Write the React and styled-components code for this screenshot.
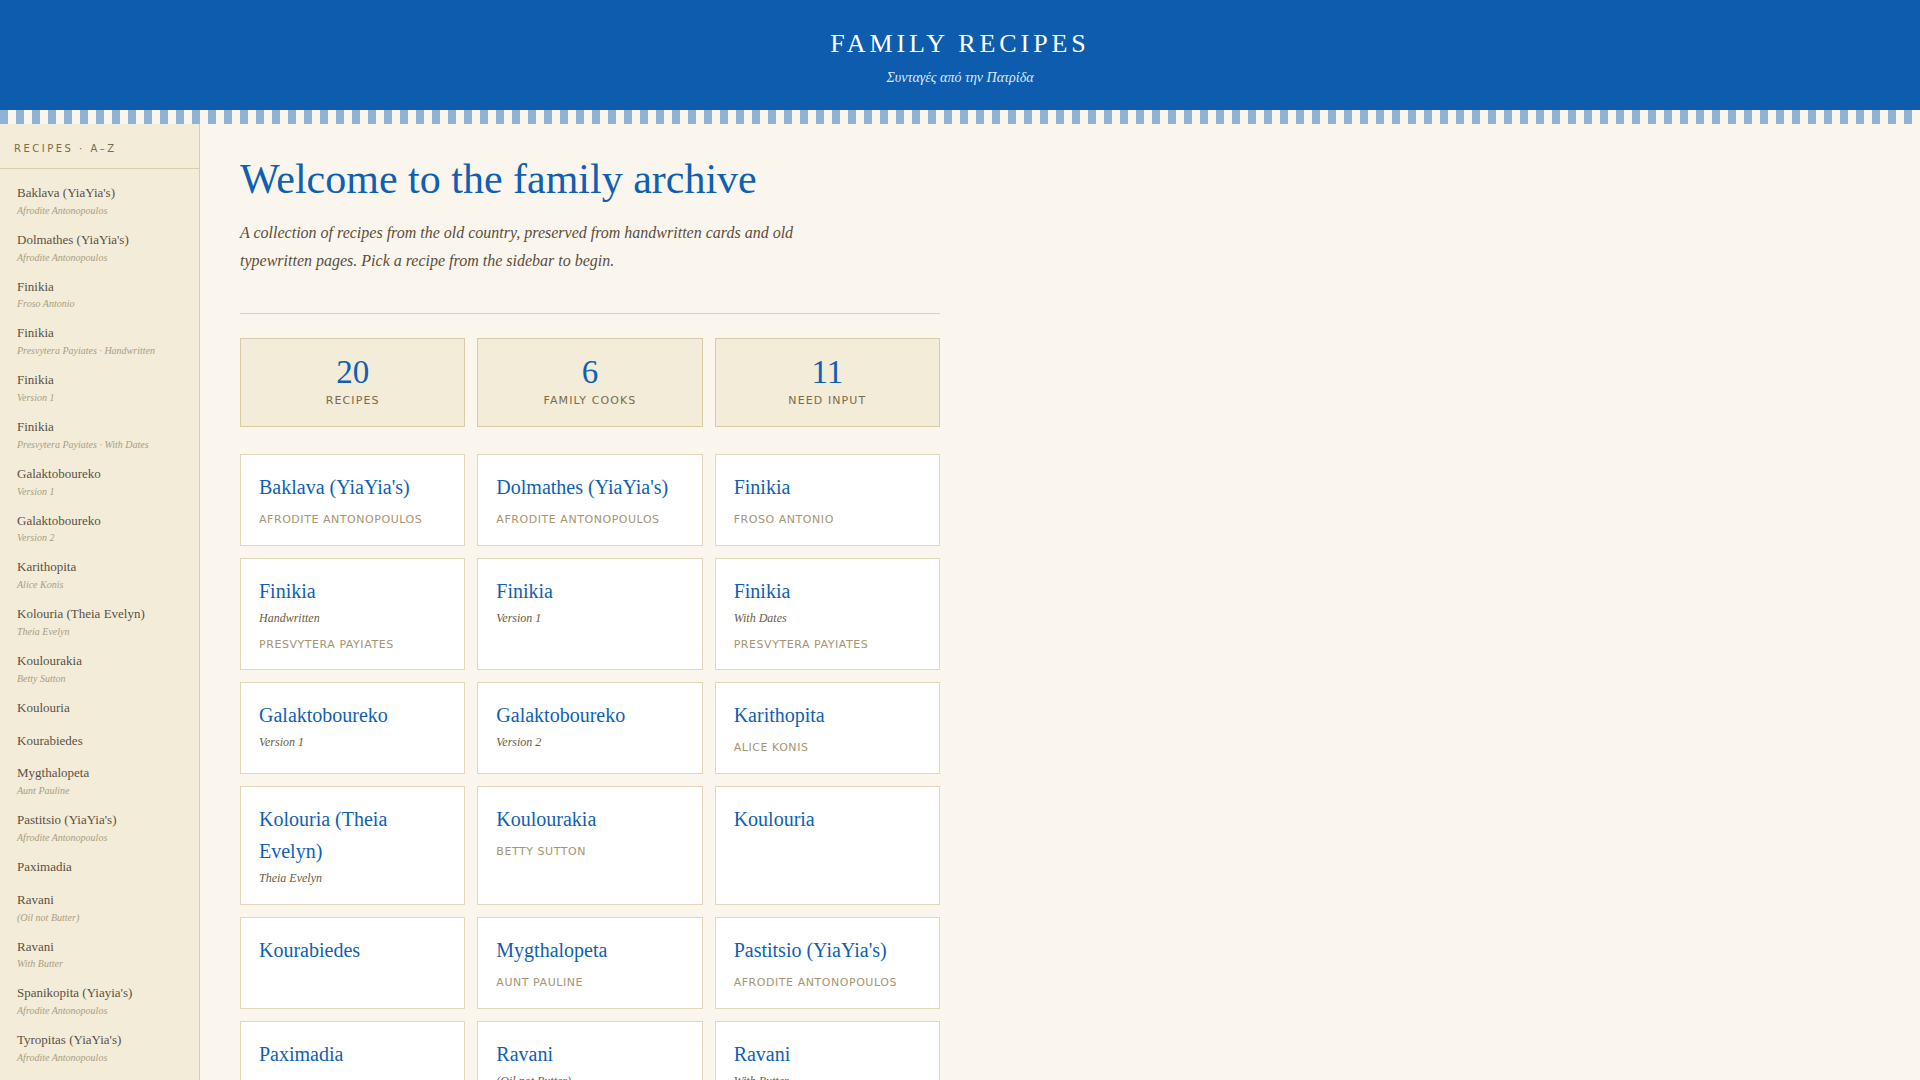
import React from "react";
import styled, { createGlobalStyle } from "styled-components";

const recipes = [
  { name: "Baklava (YiaYia's)", author: "Afrodite Antonopoulos" },
  { name: "Dolmathes (YiaYia's)", author: "Afrodite Antonopoulos" },
  { name: "Finikia", author: "Froso Antonio" },
  { name: "Finikia", variant: "Handwritten", author: "Presvytera Payiates" },
  { name: "Finikia", variant: "Version 1" },
  { name: "Finikia", variant: "With Dates", author: "Presvytera Payiates" },
  { name: "Galaktoboureko", variant: "Version 1" },
  { name: "Galaktoboureko", variant: "Version 2" },
  { name: "Karithopita", author: "Alice Konis" },
  { name: "Kolouria (Theia Evelyn)", variant: "Theia Evelyn" },
  { name: "Koulourakia", author: "Betty Sutton" },
  { name: "Koulouria" },
  { name: "Kourabiedes" },
  { name: "Mygthalopeta", author: "Aunt Pauline" },
  { name: "Pastitsio (YiaYia's)", author: "Afrodite Antonopoulos" },
  { name: "Paximadia" },
  { name: "Ravani", variant: "(Oil not Butter)" },
  { name: "Ravani", variant: "With Butter" },
  { name: "Spanikopita (Yiayia's)", author: "Afrodite Antonopoulos" },
  { name: "Tyropitas (YiaYia's)", author: "Afrodite Antonopoulos" },
];

const stats = [
  { value: 20, label: "Recipes" },
  { value: 6, label: "Family Cooks" },
  { value: 11, label: "Need Input" },
];

const GlobalStyle = createGlobalStyle`
  html, body {
    margin: 0;
    padding: 0;
    background: #faf6ee;
  }
  body {
    font-family: "Liberation Serif", "Times New Roman", serif;
    line-height: 1.6;
    color: #4a3f30;
  }
  * { box-sizing: border-box; }
`;

export default function App() {
  return (
    <>
      <GlobalStyle />
      <Header>
        <SiteTitle>Family Recipes</SiteTitle>
        <SiteSub>Συνταγές από την Πατρίδα</SiteSub>
      </Header>
      <Stripes />
      <Layout>
        <Sidebar>
          <SideHead>Recipes · A–Z</SideHead>
          <SideList>
            {recipes.map((r, i) => {
              const sub = [r.author, r.variant].filter(Boolean).join(" · ");
              return (
                <SideItem key={i}>
                  <SideName>{r.name}</SideName>
                  {sub && <SideSub>{sub}</SideSub>}
                </SideItem>
              );
            })}
          </SideList>
        </Sidebar>
        <Main>
          <Title>Welcome to the family archive</Title>
          <Intro>
            A collection of recipes from the old country, preserved from
            handwritten cards and old typewritten pages. Pick a recipe from the
            sidebar to begin.
          </Intro>
          <Rule />
          <StatGrid>
            {stats.map((s) => (
              <Stat key={s.label}>
                <StatValue>{s.value}</StatValue>
                <StatLabel>{s.label}</StatLabel>
              </Stat>
            ))}
          </StatGrid>
          <CardGrid>
            {recipes.map((r, i) => (
              <Card key={i}>
                <CardTitle>{r.name}</CardTitle>
                {r.variant && <CardVariant>{r.variant}</CardVariant>}
                {r.author && <CardAuthor>{r.author}</CardAuthor>}
              </Card>
            ))}
          </CardGrid>
        </Main>
      </Layout>
    </>
  );
}

const Header = styled.header`
  background: #0d5cae;
  color: #fff;
  text-align: center;
  padding: 28px 20px 18px;
  height: 110px;
`;

const SiteTitle = styled.h1`
  margin: 0;
  font-size: 26px;
  font-weight: 400;
  line-height: 1.2;
  letter-spacing: 0.15em;
  text-transform: uppercase;
`;

const SiteSub = styled.div`
  margin-top: 8px;
  font-size: 14px;
  font-style: italic;
  line-height: 1.6;
  color: #dfe9f5;
`;

const Stripes = styled.div`
  height: 14px;
  background: repeating-linear-gradient(
    90deg,
    #8fb3d7 0,
    #8fb3d7 8px,
    #faf6ee 8px,
    #faf6ee 16px
  );
`;

const Layout = styled.div`
  display: flex;
  align-items: stretch;
`;

const Sidebar = styled.aside`
  width: 200px;
  flex: none;
  background: #f3ecd9;
  border-right: 1px solid #dacdab;
`;

const SideHead = styled.div`
  padding: 17px 14px 11px;
  font-family: "DejaVu Sans", sans-serif;
  font-size: 10px;
  line-height: 1.6;
  letter-spacing: 0.25em;
  text-transform: uppercase;
  color: #7a6b4b;
  border-bottom: 1px solid #dacdab;
`;

const SideList = styled.div`
  padding: 8px 0;
`;

const SideItem = styled.div`
  padding: 6px 17px;
`;

const SideName = styled.div`
  font-size: 13px;
  line-height: 1.6;
  color: #5b5142;
`;

const SideSub = styled.div`
  font-size: 10px;
  font-style: italic;
  line-height: 1.4;
  color: #aa9e80;
`;

const Main = styled.main`
  flex: 1;
  padding: 30px 40px 40px;
`;

const Title = styled.h2`
  margin: 0;
  font-size: 42px;
  font-weight: 400;
  line-height: 1.2;
  color: #0f5fb3;
`;

const Intro = styled.p`
  margin: 15px 0 0;
  max-width: 600px;
  font-size: 16px;
  font-style: italic;
  line-height: 1.7;
  color: #5a4d3c;
`;

const Rule = styled.hr`
  width: 700px;
  margin: 39px 0 0;
  border: 0;
  border-top: 1px solid #ddd0ae;
`;

const StatGrid = styled.div`
  width: 700px;
  margin-top: 24px;
  display: grid;
  grid-template-columns: repeat(3, 1fr);
  gap: 12px;
`;

const Stat = styled.div`
  background: #f3ecd8;
  border: 1px solid #d9cba6;
  padding: 14px 12px 16px;
  text-align: center;
`;

const StatValue = styled.div`
  font-size: 33px;
  line-height: 1.2;
  color: #0f5fb3;
`;

const StatLabel = styled.div`
  font-family: "DejaVu Sans", sans-serif;
  font-size: 11px;
  line-height: 1.6;
  letter-spacing: 0.1em;
  text-transform: uppercase;
  color: #7a6b4b;
`;

const CardGrid = styled.div`
  width: 700px;
  margin-top: 27px;
  display: grid;
  grid-template-columns: repeat(3, 1fr);
  gap: 12px;
`;

const Card = styled.div`
  background: #fff;
  border: 1px solid #e3d7b8;
  padding: 16px 18px;
`;

const CardTitle = styled.div`
  font-size: 20px;
  line-height: 1.6;
  color: #0f5fb3;
`;

const CardVariant = styled.div`
  margin-top: 2px;
  font-size: 12px;
  font-style: italic;
  line-height: 1.6;
  color: #6b5b3f;
`;

const CardAuthor = styled.div`
  margin-top: 8px;
  font-family: "DejaVu Sans", sans-serif;
  font-size: 11px;
  line-height: 1.6;
  letter-spacing: 0.05em;
  text-transform: uppercase;
  color: #a69570;
`;
